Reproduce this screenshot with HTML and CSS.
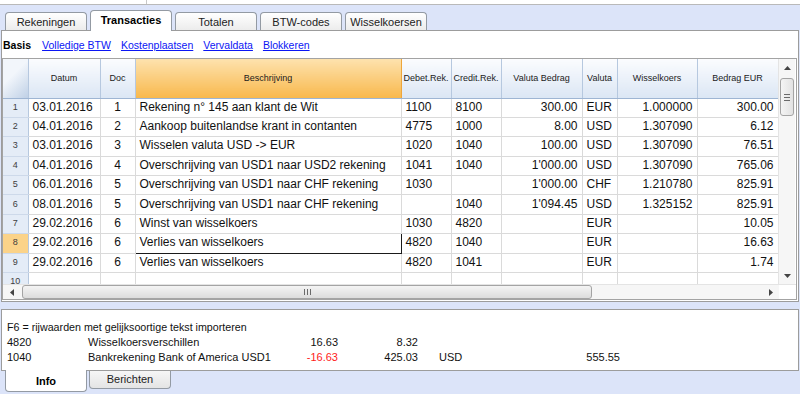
FILE: index.html
```html
<!DOCTYPE html>
<html lang="nl">
<head>
    <meta charset="UTF-8">
    <title>Transacties</title>
    <link rel="stylesheet" href="styles.css">
</head>
<body>
    <div class="topbar">
        <div class="topbar-left"></div>
        <div class="topbar-right"></div>
    </div>

    <div class="tabs">
        <div class="tab">Rekeningen</div>
        <div class="tab active">Transacties</div>
        <div class="tab">Totalen</div>
        <div class="tab">BTW-codes</div>
        <div class="tab">Wisselkoersen</div>
    </div>

    <div class="panel">
        <div class="views">
            <span class="view-current">Basis</span>
            <a href="#" class="view-link">Volledige BTW</a>
            <a href="#" class="view-link">Kostenplaatsen</a>
            <a href="#" class="view-link">Vervaldata</a>
            <a href="#" class="view-link">Blokkeren</a>
        </div>

        <div class="grid">
            <div class="grid-main">
                <div class="grid-view">
                    <table class="sheet">
                        <colgroup>
                            <col style="width:25px">
                            <col style="width:72px">
                            <col style="width:35px">
                            <col style="width:266px">
                            <col style="width:50px">
                            <col style="width:50px">
                            <col style="width:81px">
                            <col style="width:35px">
                            <col style="width:80px">
                            <col style="width:81px">
                        </colgroup>
                        <thead>
                            <tr>
                                <th class="corner"></th>
                                <th>Datum</th>
                                <th>Doc</th>
                                <th class="sorted">Beschrijving</th>
                                <th>Debet.Rek.</th>
                                <th>Credit.Rek.</th>
                                <th>Valuta Bedrag</th>
                                <th>Valuta</th>
                                <th>Wisselkoers</th>
                                <th>Bedrag EUR</th>
                            </tr>
                        </thead>
                        <tbody>
                            <tr>
                                <td class="rownum">1</td><td>03.01.2016</td><td class="center">1</td><td>Rekening n° 145 aan klant de Wit</td>
                                <td>1100</td><td>8100</td><td class="num">300.00</td><td>EUR</td><td class="num">1.000000</td><td class="num">300.00</td>
                            </tr>
                            <tr>
                                <td class="rownum">2</td><td>04.01.2016</td><td class="center">2</td><td>Aankoop buitenlandse krant in contanten</td>
                                <td>4775</td><td>1000</td><td class="num">8.00</td><td>USD</td><td class="num">1.307090</td><td class="num">6.12</td>
                            </tr>
                            <tr>
                                <td class="rownum">3</td><td>03.01.2016</td><td class="center">3</td><td>Wisselen valuta USD -&gt; EUR</td>
                                <td>1020</td><td>1040</td><td class="num">100.00</td><td>USD</td><td class="num">1.307090</td><td class="num">76.51</td>
                            </tr>
                            <tr>
                                <td class="rownum">4</td><td>04.01.2016</td><td class="center">4</td><td>Overschrijving van USD1 naar USD2 rekening</td>
                                <td>1041</td><td>1040</td><td class="num">1'000.00</td><td>USD</td><td class="num">1.307090</td><td class="num">765.06</td>
                            </tr>
                            <tr>
                                <td class="rownum">5</td><td>06.01.2016</td><td class="center">5</td><td>Overschrijving van USD1 naar CHF rekening</td>
                                <td>1030</td><td></td><td class="num">1'000.00</td><td>CHF</td><td class="num">1.210780</td><td class="num">825.91</td>
                            </tr>
                            <tr>
                                <td class="rownum">6</td><td>08.01.2016</td><td class="center">5</td><td>Overschrijving van USD1 naar CHF rekening</td>
                                <td></td><td>1040</td><td class="num">1'094.45</td><td>USD</td><td class="num">1.325152</td><td class="num">825.91</td>
                            </tr>
                            <tr>
                                <td class="rownum">7</td><td>29.02.2016</td><td class="center">6</td><td>Winst van wisselkoers</td>
                                <td>1030</td><td>4820</td><td class="num"></td><td>EUR</td><td class="num"></td><td class="num">10.05</td>
                            </tr>
                            <tr class="current">
                                <td class="rownum">8</td><td>29.02.2016</td><td class="center">6</td><td class="focus">Verlies van wisselkoers</td>
                                <td>4820</td><td>1040</td><td class="num"></td><td>EUR</td><td class="num"></td><td class="num">16.63</td>
                            </tr>
                            <tr>
                                <td class="rownum">9</td><td>29.02.2016</td><td class="center">6</td><td>Verlies van wisselkoers</td>
                                <td>4820</td><td>1041</td><td class="num"></td><td>EUR</td><td class="num"></td><td class="num">1.74</td>
                            </tr>
                            <tr>
                                <td class="rownum">10</td><td></td><td></td><td></td>
                                <td></td><td></td><td></td><td></td><td></td><td></td>
                            </tr>
                        </tbody>
                    </table>
                </div>

                <div class="vscroll">
                    <div class="arrow">
                        <svg width="7" height="4" viewBox="0 0 7 4"><path d="M0 4 L3.5 0 L7 4 Z" fill="#444"/></svg>
                    </div>
                    <div class="vthumb">
                        <span class="grip-h"></span>
                        <span class="grip-h"></span>
                        <span class="grip-h"></span>
                    </div>
                    <div class="track"></div>
                    <div class="arrow">
                        <svg width="7" height="4" viewBox="0 0 7 4"><path d="M0 0 L3.5 4 L7 0 Z" fill="#444"/></svg>
                    </div>
                </div>
            </div>

            <div class="hscroll">
                <div class="harrow">
                    <svg width="4" height="7" viewBox="0 0 4 7"><path d="M4 0 L0 3.5 L4 7 Z" fill="#444"/></svg>
                </div>
                <div class="hthumb">
                    <span class="grip-v"></span>
                    <span class="grip-v"></span>
                    <span class="grip-v"></span>
                </div>
                <div class="track"></div>
                <div class="harrow">
                    <svg width="4" height="7" viewBox="0 0 4 7"><path d="M0 0 L4 3.5 L0 7 Z" fill="#444"/></svg>
                </div>
                <div class="scroll-corner"></div>
            </div>
        </div>
    </div>

    <div class="info">
        <div class="info-line">F6 = rijwaarden met gelijksoortige tekst importeren</div>
        <div class="info-row">
            <span>4820</span>
            <span>Wisselkoersverschillen</span>
            <span class="num">16.63</span>
            <span class="num">8.32</span>
            <span class="cur"></span>
            <span class="num"></span>
        </div>
        <div class="info-row">
            <span>1040</span>
            <span>Bankrekening Bank of America USD1</span>
            <span class="num negative">-16.63</span>
            <span class="num">425.03</span>
            <span class="cur">USD</span>
            <span class="num">555.55</span>
        </div>
    </div>

    <div class="bottom-tabs">
        <div class="btab active">Info</div>
        <div class="btab">Berichten</div>
    </div>
</body>
</html>
```

FILE: styles.css
```css
* {
    margin: 0;
    padding: 0;
    box-sizing: border-box;
}

body {
    font-family: 'Liberation Sans', Arial, sans-serif;
    background: #dce4f9;
    color: #000000;
    width: 800px;
    height: 394px;
    overflow: hidden;
}

/* top strip (cut off toolbar) */
.topbar {
    display: flex;
    height: 5px;
    background: #ffffff;
    border-bottom: 1px solid #b9b9b9;
}

.topbar-left {
    width: 147px;
    border-right: 1px solid #c8c8c8;
}

/* main tabs */
.tabs {
    display: flex;
    align-items: flex-end;
    gap: 3px;
    height: 25px;
    padding-left: 5px;
}

.tab {
    width: 82px;
    height: 18px;
    border: 1px solid #939aa3;
    border-bottom: none;
    border-radius: 4px 4px 0 0;
    background: linear-gradient(#ffffff, #ececec);
    font-size: 11px;
    color: #222222;
    text-align: center;
    line-height: 18px;
}

.tab.active {
    height: 21px;
    margin-bottom: -1px;
    position: relative;
    z-index: 1;
    background: #ffffff;
    font-weight: bold;
    color: #000000;
    line-height: 19px;
}

/* white panel with the grid */
.panel {
    margin: 0 1px;
    background: #ffffff;
    border: 1px solid #9c9c9c;
    padding: 0 1px 1px 0;
}

.views {
    display: flex;
    align-items: center;
    gap: 10px;
    height: 27px;
    padding-left: 1px;
    font-size: 10.5px;
}

.view-current {
    font-weight: bold;
    margin-right: 1px;
}

.view-link {
    color: #0b16f4;
}

.grid {
    border: 1px solid #a3a3a3;
}

.grid-main {
    display: flex;
    height: 225px;
}

.grid-view {
    width: 775px;
    overflow: hidden;
}

.sheet {
    table-layout: fixed;
    width: 775px;
    border-collapse: collapse;
}

.sheet th {
    height: 39px;
    font-size: 9px;
    font-weight: normal;
    color: #1b1b1b;
    text-align: center;
    background: linear-gradient(#fbfcfe, #dbe6f4);
    border-right: 1px solid #b6c8df;
    border-bottom: 1px solid #9eb5d3;
}

.sheet th.corner {
    background: linear-gradient(135deg, #f2f6fb 40%, #bfd0e6);
}

.sheet th.sorted {
    background: linear-gradient(#fde2ae, #f8b84c);
    border-left: 1px solid #eea63b;
    border-right: 1px solid #eea63b;
}

.sheet tbody tr {
    height: 19.4px;
}

.sheet td {
    font-size: 12px;
    padding: 0 4px 2px;
    white-space: nowrap;
    overflow: hidden;
    border-right: 1px solid #dadada;
    border-bottom: 1px solid #dadada;
    color: #111111;
}

.sheet td.center {
    text-align: center;
}

.sheet td.num {
    text-align: right;
}

.sheet td.rownum {
    font-size: 9px;
    text-align: center;
    color: #3d3d3d;
    background: #e4ecf7;
    border-right: 1px solid #b6c8df;
    border-bottom: 1px solid #cdd9ea;
}

.sheet tr.current td.rownum {
    background: #fbd389;
}

.sheet td.focus {
    border: 1px solid #1a1a1a;
}

/* scrollbars */
.vscroll {
    width: 17px;
    display: flex;
    flex-direction: column;
    align-items: center;
    background: #f6f6f6;
    border-left: 1px solid #e4e4e4;
}

.arrow {
    height: 17px;
    width: 100%;
    display: flex;
    align-items: center;
    justify-content: center;
}

.vthumb {
    width: 14px;
    height: 38px;
    margin-top: 2px;
    border: 1px solid #a4a4a4;
    border-radius: 3px;
    background: linear-gradient(90deg, #f4f4f4, #e2e2e2);
    display: flex;
    flex-direction: column;
    align-items: center;
    justify-content: center;
    gap: 2px;
}

.grip-h {
    width: 6px;
    height: 1px;
    background: #6a6a6a;
}

.track {
    flex: 1;
}

.hscroll {
    display: flex;
    align-items: center;
    height: 15px;
    background: #f6f6f6;
    border-top: 1px solid #e4e4e4;
}

.harrow {
    width: 17px;
    height: 100%;
    display: flex;
    align-items: center;
    justify-content: center;
}

.hthumb {
    width: 570px;
    height: 14px;
    margin-left: 2px;
    border: 1px solid #a4a4a4;
    border-radius: 3px;
    background: linear-gradient(#f4f4f4, #dcdcdc);
    display: flex;
    align-items: center;
    justify-content: center;
    gap: 2px;
}

.grip-v {
    width: 1px;
    height: 6px;
    background: #6a6a6a;
}

.scroll-corner {
    width: 17px;
    height: 100%;
    background: #ffffff;
}

/* info area */
.info {
    margin: 7px 1px 0;
    height: 62px;
    background: #ffffff;
    border: 1px solid #9c9c9c;
    padding: 10px 0 0 5px;
    font-size: 11px;
    line-height: 15px;
    color: #111111;
}

.info-line {
    font-size: 10.7px;
}

.info-row {
    display: grid;
    grid-template-columns: 81px 190px 60px 80px 121px 81px;
}

.info-row .num {
    text-align: right;
}

.info-row .cur {
    padding-left: 21px;
}

.info-row .negative {
    color: #ff1a1a;
}

/* bottom tabs */
.bottom-tabs {
    display: flex;
    align-items: flex-start;
    gap: 2px;
    padding-left: 5px;
    margin-top: -1px;
}

.btab {
    width: 82px;
    height: 18px;
    border: 1px solid #939aa3;
    border-top: none;
    border-radius: 0 0 4px 4px;
    background: linear-gradient(#f6f6f6, #e4e4e4);
    font-size: 11px;
    color: #222222;
    text-align: center;
    line-height: 16px;
    margin-top: 1px;
}

.btab.active {
    height: 22px;
    margin-top: 0;
    position: relative;
    z-index: 1;
    background: #ffffff;
    font-weight: bold;
    color: #000000;
    line-height: 23px;
}
```
